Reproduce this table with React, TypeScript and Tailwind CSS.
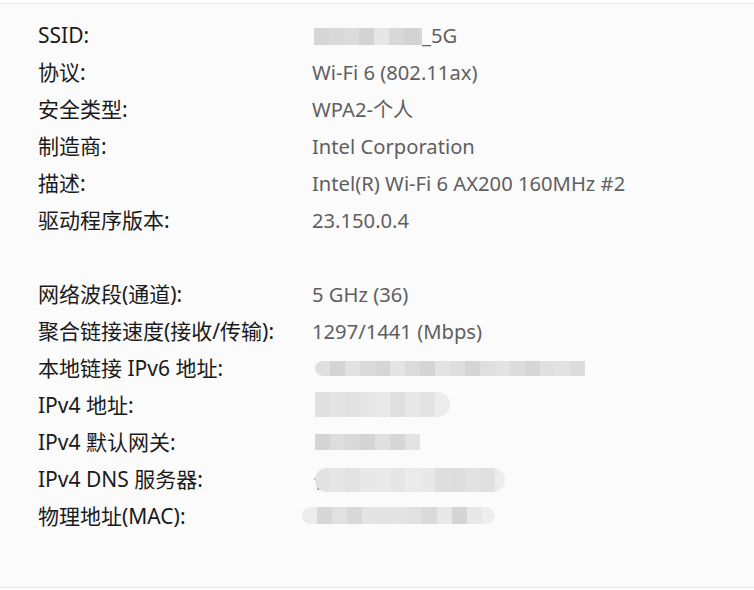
import React from 'react';

type Row = { label: string; value?: React.ReactNode };

// pixelated redaction block, widths in px, tones are gray levels
function Mosaic({ tiles, className }: { tiles: string[]; className?: string }) {
    return (
        <span className={`inline-flex overflow-hidden blur-[0.6px] ${className ?? ''}`}>
            {tiles.map((c, i) => (
                <span key={i} className="h-full w-[15px] shrink-0" style={{ backgroundColor: c }} />
            ))}
        </span>
    );
}

const ROWS: (Row | null)[] = [
    {
        label: 'SSID:',
        value: (
            <span className="flex items-center">
                <Mosaic
                    className="h-[17px] w-[108px] mt-[2px] ml-[2px]"
                    tiles={['#d6d6d6', '#d9d9d9', '#dcdcdc', '#d3d3d3', '#e6e6e6', '#d8d8d8', '#d2d2d2', '#d6d6d6']}
                />
                <span>_5G</span>
            </span>
        ),
    },
    { label: '协议:', value: 'Wi-Fi 6 (802.11ax)' },
    { label: '安全类型:', value: 'WPA2-个人' },
    { label: '制造商:', value: 'Intel Corporation' },
    { label: '描述:', value: 'Intel(R) Wi-Fi 6 AX200 160MHz #2' },
    { label: '驱动程序版本:', value: '23.150.0.4' },
    null,
    { label: '网络波段(通道):', value: '5 GHz (36)' },
    { label: '聚合链接速度(接收/传输):', value: '1297/1441 (Mbps)' },
    {
        label: '本地链接 IPv6 地址:',
        value: (
            <Mosaic
                className="h-[15px] w-[270px] mt-[1px] ml-[3px] rounded-l-full"
                tiles={['#e0e0e0', '#d4d4d4', '#e2e2e2', '#dadada', '#d6d6d6', '#e4e4e4', '#dbdbdb', '#d4d4d4', '#e3e3e3', '#dedede', '#d5d5d5', '#dfdfdf', '#e3e3e3', '#dcdcdc', '#d6d6d6', '#e0e0e0', '#e2e2e2', '#dcdcdc']}
            />
        ),
    },
    {
        label: 'IPv4 地址:',
        value: (
            <Mosaic
                className="h-[25px] w-[135px] ml-[3px] rounded-r-full"
                tiles={['#e0e0e0', '#e4e4e4', '#e2e2e2', '#e6e6e6', '#e9e9e9', '#dfdfdf', '#e8e8e8', '#e4e4e4', '#ececec']}
            />
        ),
    },
    {
        label: 'IPv4 默认网关:',
        value: (
            <Mosaic
                className="h-[16px] w-[105px] ml-[3px]"
                tiles={['#d5d5d5', '#dddddd', '#d9d9d9', '#d5d5d5', '#e0e0e0', '#d6d6d6', '#e3e3e3']}
            />
        ),
    },
    {
        label: 'IPv4 DNS 服务器:',
        value: (
            <span className="relative flex items-center">
                <span className="absolute left-0 top-[4px] text-[#8a8a8a]">1</span>
                <Mosaic
                    className="relative h-[24px] w-[190px] ml-[3px] rounded-full"
                    tiles={['#e2e2e2', '#e6e6e6', '#e3e3e3', '#e8e8e8', '#e9e9e9', '#e6e6e6', '#ebebeb', '#e8e8e8', '#dedede', '#dddddd', '#e2e2e2', '#e0e0e0', '#ededed']}
                />
            </span>
        ),
    },
    {
        label: '物理地址(MAC):',
        value: (
            <Mosaic
                className="h-[17px] w-[193px] ml-[-10px] rounded-full"
                tiles={['#ececec', '#d7d7d7', '#e1e1e1', '#d8d8d8', '#e4e4e4', '#e3e3e3', '#e4e4e4', '#e1e1e1', '#dadada', '#e8e8e8', '#d5d5d5', '#e8e8e8', '#eeeeee']}
            />
        ),
    },
];

export default function App() {
    return (
        <div
            className="w-[754px] h-[590px] bg-white pt-[3px] overflow-hidden"
            style={{ fontFamily: '"Noto Sans", "Noto Sans CJK SC", sans-serif' }}
        >
            <div className="h-[585px] bg-[#fbfbfb] border-t border-b border-[#e6e6e6] pt-[13px] pl-[38px]">
                {ROWS.map((row, i) =>
                    row ? (
                        <div key={i} className="flex h-[37px] items-center leading-none">
                            <div className="w-[274px] shrink-0 text-[21px] text-[#1a1a1a]">{row.label}</div>
                            <div className="text-[20.2px] text-[#5f5f5f]">{row.value}</div>
                        </div>
                    ) : (
                        <div key={i} className="h-[37px]" />
                    )
                )}
            </div>
        </div>
    );
}
